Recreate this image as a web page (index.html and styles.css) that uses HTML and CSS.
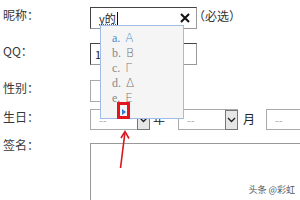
FILE: index.html
```html
<!DOCTYPE html>
<html lang="zh-CN">
<head>
<meta charset="utf-8">
<title>表单</title>
<link rel="stylesheet" href="styles.css">
</head>
<body>
<div class="form">
  <div class="row r-nick">
    <span class="label">昵称：</span>
    <div class="field nick">
      <span class="val">y的</span><span class="caret"></span>
      <svg class="clear" width="10" height="10" viewBox="0 0 10 10"><path d="M1 1L9 9M9 1L1 9" stroke="#111" stroke-width="2" fill="none"/></svg>
    </div>
    <span class="hint">（必选）</span>
  </div>
  <div class="row r-qq">
    <span class="label">QQ：</span>
    <div class="field qq">1</div>
  </div>
  <div class="row r-sex">
    <span class="label">性别：</span>
    <div class="field sex"></div>
  </div>
  <div class="row r-birth">
    <span class="label">生日：</span>
    <div class="sel"><span class="dash">--</span><span class="btn"><svg width="9" height="6" viewBox="0 0 9 6"><path d="M1 1L4.5 4.5L8 1" stroke="#222" stroke-width="1.4" fill="none"/></svg></span></div>
    <span class="unit">年</span>
    <div class="sel month"><span class="dash">--</span><span class="btn"><svg width="9" height="6" viewBox="0 0 9 6"><path d="M1 1L4.5 4.5L8 1" stroke="#222" stroke-width="1.4" fill="none"/></svg></span></div>
    <span class="unit">月</span>
    <div class="sel day"><span class="dash">--</span></div>
  </div>
  <div class="row r-sign">
    <span class="label label-top">签名：</span>
    <div class="field sign"></div>
  </div>
</div>

<div class="popup">
  <div class="item active">a. <span class="g">Α</span></div>
  <div class="item">b. <span class="g">Β</span></div>
  <div class="item">c. <span class="g">Γ</span></div>
  <div class="item">d. <span class="g">Δ</span></div>
  <div class="item">e. <span class="g">Ε</span></div>
  <div class="item more"><span class="tri"></span></div>
</div>

<div class="mark"></div>

<svg class="arrow" width="300" height="200" viewBox="0 0 300 200">
  <path d="M120.5 168L125 132" stroke="#d81a20" stroke-width="1.6" fill="none"/>
  <path d="M121 138L125 131.5L129 138.5" stroke="#d81a20" stroke-width="1.6" fill="none"/>
</svg>

<div class="watermark">头条 @彩虹</div>
</body>
</html>
```
FILE: styles.css
```css
html, body {
  margin: 0;
  padding: 0;
  width: 300px;
  height: 200px;
  overflow: hidden;
  background: #fff;
  font-family: "Noto Sans CJK SC", "Noto Sans", sans-serif;
  font-size: 12px;
  color: #333;
}

.form {
  padding-top: 7px;
  display: flex;
  flex-direction: column;
}

.row {
  display: flex;
  align-items: flex-start;
  white-space: nowrap;
}

.r-nick { height: 22px; margin-bottom: 14px; }
.r-qq { height: 22px; margin-bottom: 15px; }
.r-sex { height: 22px; margin-bottom: 7px; }
.r-birth { height: 21px; margin-bottom: 13px; }
.r-sign { height: 57px; }

.label {
  width: 87px;
  padding-left: 3px;
  flex: none;
  line-height: 16px;
  height: 16px;
  color: #383838;
}

.label-top {
  margin-top: -6px;
}

.field {
  box-sizing: border-box;
  height: 22px;
  border: 1px solid;
  border-color: #444 #999 #999 #444;
  background: #fff;
  flex: none;
  display: flex;
  align-items: center;
}

.nick {
  width: 107px;
  padding-left: 8px;
}

.nick .val {
  font-size: 11px;
  line-height: 12px;
  color: #222;
  border-bottom: 1px dotted #666;
}

.caret {
  width: 1px;
  height: 13px;
  background: #111;
  margin-left: 1px;
}

.clear {
  margin-left: auto;
  margin-right: 6px;
}

.hint {
  margin-left: -4px;
  line-height: 18px;
  color: #333;
}

.qq {
  width: 107px;
  padding-left: 4px;
  font-size: 11px;
  color: #222;
}

.sex {
  width: 80px;
  border-color: #aaa;
}

.sel {
  box-sizing: border-box;
  width: 60px;
  height: 21px;
  border: 1px solid #aaa;
  border-right: none;
  display: flex;
  align-items: center;
  flex: none;
}

.sel .dash {
  padding-left: 8px;
  color: #aaa;
  font-size: 11px;
}

.sel .btn {
  margin-left: auto;
  box-sizing: border-box;
  width: 13px;
  height: 20px;
  border: 1px solid #777;
  background: #e6e6e6;
  display: flex;
  align-items: center;
  justify-content: center;
}

.unit {
  margin-left: 3px;
  margin-right: 13px;
  font-size: 12px;
  line-height: 20px;
  color: #222;
}

.month + .unit {
  margin-left: 5px;
  margin-right: 11px;
}

.day {
  width: 35px;
}

.sign {
  width: 210px;
  height: 57px;
  border-color: #999;
  border-right: none;
  border-bottom: none;
}

.popup {
  position: absolute;
  left: 100px;
  top: 25px;
  width: 84px;
  height: 94px;
  box-sizing: border-box;
  border: 1px solid #9fbde6;
  background: #f5f5f5;
  padding-top: 5px;
  padding-left: 11px;
  font-family: "Liberation Serif", "DejaVu Serif", serif;
  font-size: 12px;
  overflow: hidden;
}

.item {
  height: 15px;
  line-height: 15px;
  color: #888;
}

.item .g {
  font-family: "DejaVu Sans", sans-serif;
  font-weight: 200;
  font-size: 12px;
  margin-left: 2px;
  color: #777;
}

.item.active,
.item.active .g {
  color: #4a8ad4;
}

.item.more {
  position: relative;
}

.tri {
  position: absolute;
  left: 10px;
  top: 3px;
  width: 0;
  height: 0;
  border-top: 3.5px solid transparent;
  border-bottom: 3.5px solid transparent;
  border-left: 4px solid #2f7ad0;
}

.mark {
  position: absolute;
  left: 117px;
  top: 102px;
  width: 13px;
  height: 17px;
  box-sizing: border-box;
  border: 3px solid #e3161e;
}

.arrow {
  position: absolute;
  left: 0;
  top: 0;
  pointer-events: none;
}

.watermark {
  position: absolute;
  right: 5px;
  top: 184px;
  font-size: 9px;
  line-height: 12px;
  white-space: nowrap;
  color: #555;
}
```
